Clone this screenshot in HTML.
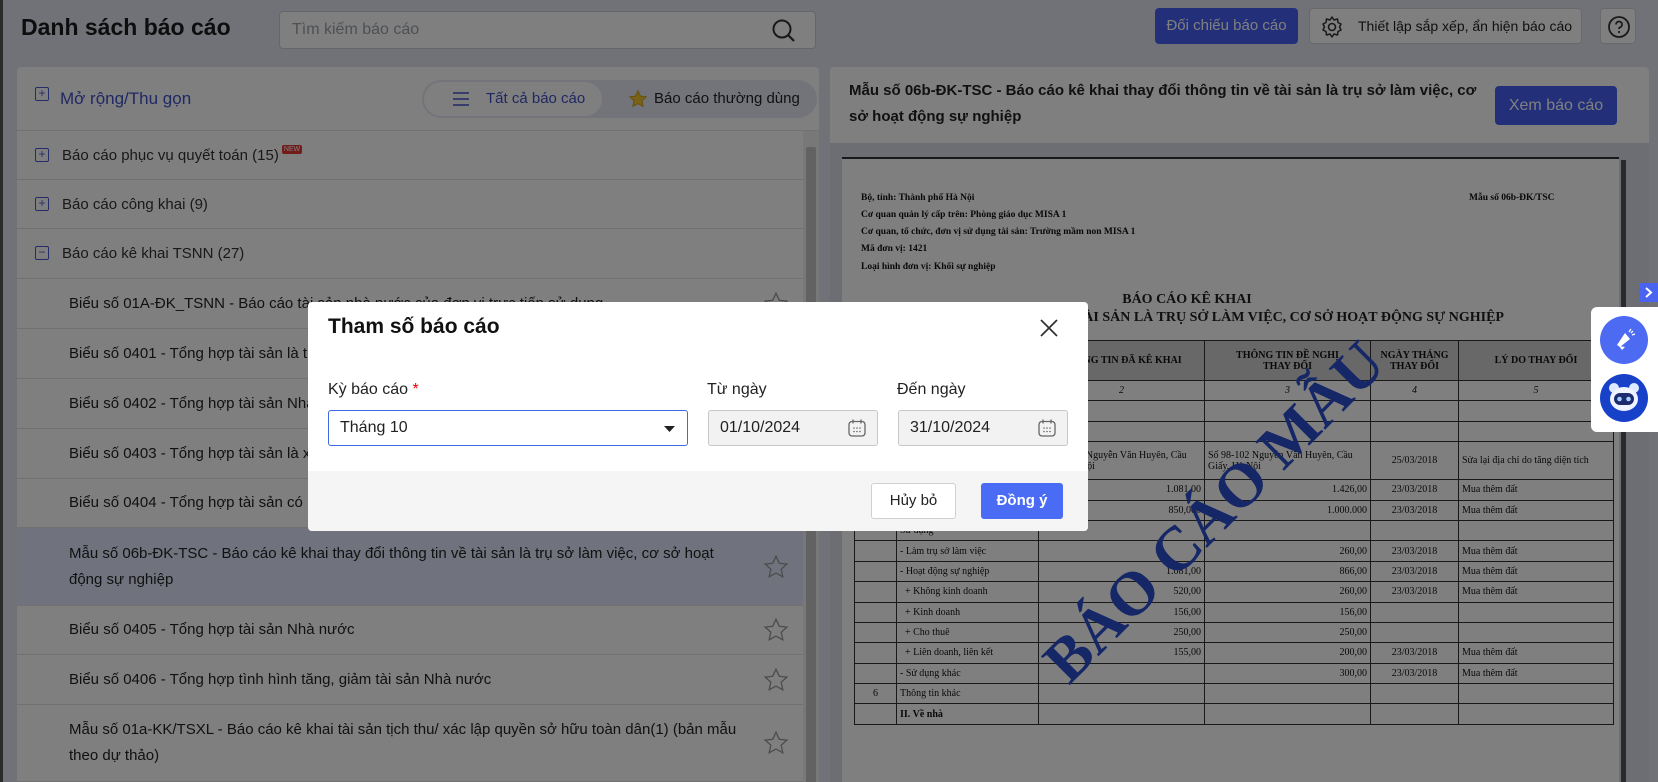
<!DOCTYPE html>
<html><head><meta charset="utf-8">
<style>
*{box-sizing:border-box;margin:0;padding:0}
html{overflow:hidden;width:1658px;height:782px}
body{width:1658px;height:782px;overflow:hidden;position:relative;background:#e0e5f0;font-family:"Liberation Sans",sans-serif;color:#212121}
.a{position:absolute}
.title{left:21px;top:14px;font-size:23px;font-weight:bold;color:#1a1a1a}
.search{left:279px;top:11px;width:537px;height:38px;background:#fff;border:1px solid #c8ccd4;border-radius:4px}
.search span{position:absolute;left:12px;top:9px;font-size:16px;color:#9aa0a8}
.btn1{left:1155px;top:8px;width:143px;height:36px;background:#4660f2;border-radius:4px;color:#fff;font-size:15px;text-align:center;line-height:36px}
.btn2{left:1309px;top:8px;width:273px;height:36px;background:#fff;border:1px solid #cfd3da;border-radius:4px;font-size:14px;line-height:34px;white-space:nowrap}
.btn3{left:1600px;top:8px;width:36px;height:36px;background:#fff;border:1px solid #cfd3da;border-radius:4px}
.lp{left:17px;top:67px;width:802px;height:715px;background:#fff;border-radius:4px 4px 0 0;overflow:hidden}
.row{position:absolute;left:0;width:786px;border-bottom:1px solid #e3e3e3;font-size:15px;display:flex;align-items:center}
.cat{padding-left:45px;color:#333;font-weight:500}
.item{padding-left:52px;padding-right:66px;color:#222;line-height:26px}
.pl{position:absolute;left:18px;width:14px;height:14px;border:1.5px solid #4a5bd0;border-radius:2px;color:#4a5bd0;font-size:12px;line-height:10px;text-align:center}
.star{position:absolute;right:14px;top:50%;margin-top:-13px}
.rp{left:830px;top:67px;width:819px;height:76px;background:#fff;border-radius:4px 4px 0 0}
.doc{left:830px;top:143px;width:819px;height:639px;background:#d8dde8}
.page{left:842px;top:157px;width:777px;height:625px;background:#fff;border-top:2px solid #333;font-family:"Liberation Serif",serif;font-weight:bold;overflow:hidden}
.dl{position:absolute;left:19px;font-size:9.5px;color:#111}
table{border-collapse:collapse;table-layout:fixed;position:absolute;left:12px;top:181px;width:760px;font-size:10px;font-weight:normal;color:#111}
td{border:1.5px solid #333;height:20.4px;padding:0 3px;white-space:nowrap;overflow:hidden}
th{border:1.5px solid #333;font-size:10px;background:#d0d0d0;height:40px;font-weight:bold}
.r{text-align:right}.c{text-align:center}
.ov{position:fixed;left:0;top:0;width:1658px;height:782px;background:rgba(0,0,0,0.5)}
.modal{left:308px;top:302px;width:780px;height:229px;background:#fff;border-radius:4px;overflow:hidden}
.lab{position:absolute;top:79px;font-size:16px;color:#222}
.inp{position:absolute;top:108px;height:36px;border:1px solid #c8c8c8;border-radius:3px;background:#f2f2f2;font-size:16px;line-height:34px;padding-left:11px}
.foot{position:absolute;left:0;top:169px;width:780px;height:60px;background:#f5f5f5}
</style></head><body>
<div class="a" style="left:0;top:0;width:3px;height:782px;background:#555"></div>
<div class="a title">Danh sách báo cáo</div>
<div class="a search"><span>Tìm kiếm báo cáo</span>
<svg class="a" style="left:491px;top:6px" width="26" height="26" viewBox="0 0 26 26"><circle cx="11" cy="11" r="8.5" fill="none" stroke="#333" stroke-width="2"/><line x1="17" y1="17" x2="23" y2="23" stroke="#333" stroke-width="2.2"/></svg></div>
<div class="a btn1">Đối chiếu báo cáo</div>
<div class="a btn2"><svg class="a" style="left:10px;top:6px" width="24" height="24" viewBox="0 0 24 24"><circle cx="12" cy="12" r="3.5" fill="none" stroke="#333" stroke-width="1.6"/><path d="M12 2l2 3 3.5-1 .5 3.5 3 1.5-1.5 3 1.5 3-3 1.5-.5 3.5-3.5-1-2 3-2-3-3.5 1-.5-3.5-3-1.5 1.5-3-1.5-3 3-1.5.5-3.5 3.5 1z" fill="none" stroke="#333" stroke-width="1.5" stroke-linejoin="round"/></svg><span style="position:absolute;left:48px">Thiết lập sắp xếp, ẩn hiện báo cáo</span></div>
<div class="a btn3"><svg class="a" style="left:6px;top:6px" width="24" height="24" viewBox="0 0 24 24"><circle cx="12" cy="12" r="10" fill="none" stroke="#333" stroke-width="1.8"/><path d="M9 9.5a3 3 0 1 1 4 2.8c-.8.3-1 .9-1 1.7" fill="none" stroke="#333" stroke-width="1.8"/><circle cx="12" cy="17" r="1.1" fill="#333"/></svg></div>

<div class="a lp">
 <div class="row" style="top:0;height:64px;width:802px"><div class="pl" style="top:20px">+</div><span style="position:absolute;left:43px;color:#3f51c7;font-size:17px;font-weight:500">Mở rộng/Thu gọn</span>
 <div style="position:absolute;left:405px;top:13px;width:395px;height:38px;background:#e5e9f5;border-radius:19px"><div style="position:absolute;left:2px;top:2px;width:178px;height:34px;background:#fff;border-radius:17px;color:#3f51c7;font-size:15px;line-height:34px;padding-left:62px">Tất cả báo cáo</div>
 <svg style="position:absolute;left:31px;top:12px" width="16" height="14"><path d="M0 1h16M0 7h16M0 13h16" stroke="#3f51c7" stroke-width="1.6"/></svg>
 <svg style="position:absolute;left:206px;top:9px" width="20" height="20" viewBox="0 0 24 24"><path d="M12 2l3 6.5 7 .8-5.2 4.8 1.5 7L12 17.6 5.7 21l1.5-7L2 9.3l7-.8z" fill="#f2c230" stroke="#c99a10"/></svg>
 <span style="position:absolute;left:232px;top:10px;font-size:15px;color:#222">Báo cáo thường dùng</span></div></div>
 <div class="row cat" style="top:64px;height:49px"><div class="pl" style="top:17px">+</div>Báo cáo phục vụ quyết toán (15)<span style="background:#e53935;color:#fff;font-size:7px;padding:1px 2px;border-radius:2px;margin-left:3px;margin-top:-12px">NEW</span></div>
 <div class="row cat" style="top:113px;height:49px"><div class="pl" style="top:17px">+</div>Báo cáo công khai (9)</div>
 <div class="row cat" style="top:162px;height:50px"><div class="pl" style="top:17px">−</div>Báo cáo kê khai TSNN (27)</div>
 <div class="row item" style="top:212px;height:50px">Biểu số 01A-ĐK_TSNN - Báo cáo tài sản nhà nước của đơn vị trực tiếp sử dụng<svg class="star" width="26" height="26" viewBox="0 0 24 24"><path d="M12 2l3 6.5 7 .8-5.2 4.8 1.5 7L12 17.6 5.7 21l1.5-7L2 9.3l7-.8z" fill="none" stroke="#999" stroke-width="1.2"/></svg></div>
 <div class="row item" style="top:262px;height:50px">Biểu số 0401 - Tổng hợp tài sản là trụ sở làm việc</div>
 <div class="row item" style="top:312px;height:50px">Biểu số 0402 - Tổng hợp tài sản Nhà nước</div>
 <div class="row item" style="top:362px;height:50px">Biểu số 0403 - Tổng hợp tài sản là xe ô tô</div>
 <div class="row item" style="top:412px;height:49px">Biểu số 0404 - Tổng hợp tài sản có nguyên giá</div>
 <div class="row item" style="top:461px;height:78px;background:#e0e5fb">Mẫu số 06b-ĐK-TSC - Báo cáo kê khai thay đổi thông tin về tài sản là trụ sở làm việc, cơ sở hoạt động sự nghiệp<svg class="star" width="26" height="26" viewBox="0 0 24 24"><path d="M12 2l3 6.5 7 .8-5.2 4.8 1.5 7L12 17.6 5.7 21l1.5-7L2 9.3l7-.8z" fill="none" stroke="#999" stroke-width="1.2"/></svg></div>
 <div class="row item" style="top:539px;height:49px">Biểu số 0405 - Tổng hợp tài sản Nhà nước<svg class="star" width="26" height="26" viewBox="0 0 24 24"><path d="M12 2l3 6.5 7 .8-5.2 4.8 1.5 7L12 17.6 5.7 21l1.5-7L2 9.3l7-.8z" fill="none" stroke="#999" stroke-width="1.2"/></svg></div>
 <div class="row item" style="top:588px;height:50px">Biểu số 0406 - Tổng hợp tình hình tăng, giảm tài sản Nhà nước<svg class="star" width="26" height="26" viewBox="0 0 24 24"><path d="M12 2l3 6.5 7 .8-5.2 4.8 1.5 7L12 17.6 5.7 21l1.5-7L2 9.3l7-.8z" fill="none" stroke="#999" stroke-width="1.2"/></svg></div>
 <div class="row item" style="top:638px;height:77px">Mẫu số 01a-KK/TSXL - Báo cáo kê khai tài sản tịch thu/ xác lập quyền sở hữu toàn dân(1) (bản mẫu theo dự thảo)<svg class="star" width="26" height="26" viewBox="0 0 24 24"><path d="M12 2l3 6.5 7 .8-5.2 4.8 1.5 7L12 17.6 5.7 21l1.5-7L2 9.3l7-.8z" fill="none" stroke="#999" stroke-width="1.2"/></svg></div>
 <div style="position:absolute;left:786px;top:64px;width:16px;height:660px;background:#f0f0f0"><div style="position:absolute;left:3px;top:16px;width:10px;height:640px;background:#c4c4c4;border-radius:2px"></div></div>
</div>

<div class="a rp"><div style="position:absolute;left:19px;top:11px;width:640px;font-size:15px;font-weight:bold;line-height:26px;color:#222">Mẫu số 06b-ĐK-TSC - Báo cáo kê khai thay đổi thông tin về tài sản là trụ sở làm việc, cơ sở hoạt động sự nghiệp</div>
<div style="position:absolute;left:665px;top:19px;width:122px;height:39px;background:#4660f2;border-radius:4px;color:#fff;font-size:16px;line-height:39px;text-align:center">Xem báo cáo</div></div>
<div class="a doc"></div>
<div class="a" style="left:1621px;top:160px;width:5px;height:622px;background:#555"></div>
<div class="a page">
 <div class="dl" style="top:34px">Bộ, tỉnh: Thành phố Hà Nội</div>
 <div class="dl" style="left:627px;top:34px">Mẫu số 06b-ĐK/TSC</div>
 <div class="dl" style="top:51px">Cơ quan quản lý cấp trên: Phòng giáo dục MISA 1</div>
 <div class="dl" style="top:68px">Cơ quan, tổ chức, đơn vị sử dụng tài sản: Trường mầm non MISA 1</div>
 <div class="dl" style="top:85px">Mã đơn vị: 1421</div>
 <div class="dl" style="top:103px">Loại hình đơn vị: Khối sự nghiệp</div>
 <div style="position:absolute;left:0;width:690px;text-align:center;top:133px;font-size:14px">BÁO CÁO KÊ KHAI</div>
 <div style="position:absolute;right:115px;top:151px;font-size:14px;white-space:nowrap">THAY ĐỔI THÔNG TIN VỀ TÀI SẢN LÀ TRỤ SỞ LÀM VIỆC, CƠ SỞ HOẠT ĐỘNG SỰ NGHIỆP</div>
 <table>
 <colgroup><col style="width:42px"><col style="width:142px"><col style="width:166px"><col style="width:166px"><col style="width:88px"><col></colgroup>
 <tr><th>STT</th><th>CHỈ TIÊU</th><th>THÔNG TIN ĐÃ KÊ KHAI</th><th>THÔNG TIN ĐỀ NGHỊ<br>THAY ĐỔI</th><th>NGÀY THÁNG<br>THAY ĐỔI</th><th>LÝ DO THAY ĐỔI</th></tr>
 <tr style="font-style:italic"><td class="c">A</td><td class="c">1</td><td class="c">2</td><td class="c">3</td><td class="c">4</td><td class="c">5</td></tr>
 <tr><td></td><td></td><td></td><td></td><td></td><td></td></tr>
 <tr><td></td><td>Địa chỉ nhà</td><td></td><td></td><td></td><td></td></tr>
 <tr><td style="height:38px"></td><td></td><td style="white-space:normal">Số 98-102 Nguyễn Văn Huyên, Cầu Giấy, Hà Nội</td><td style="white-space:normal">Số 98-102 Nguyễn Văn Huyên, Cầu Giấy, Hà Nội</td><td class="c">25/03/2018</td><td>Sửa lại địa chỉ do tăng diện tích</td></tr>
 <tr><td></td><td>Diện tích đất</td><td class="r">1.081,00</td><td class="r">1.426,00</td><td class="c">23/03/2018</td><td>Mua thêm đất</td></tr>
 <tr><td></td><td>Diện tích sàn</td><td class="r">850,000</td><td class="r">1.000.000</td><td class="c">23/03/2018</td><td>Mua thêm đất</td></tr>
 <tr><td></td><td>Sử dụng</td><td></td><td></td><td></td><td></td></tr>
 <tr><td></td><td>- Làm trụ sở làm việc</td><td></td><td class="r">260,00</td><td class="c">23/03/2018</td><td>Mua thêm đất</td></tr>
 <tr><td></td><td>- Hoạt động sự nghiệp</td><td class="r">1.081,00</td><td class="r">866,00</td><td class="c">23/03/2018</td><td>Mua thêm đất</td></tr>
 <tr><td></td><td>&nbsp;&nbsp;+ Không kinh doanh</td><td class="r">520,00</td><td class="r">260,00</td><td class="c">23/03/2018</td><td>Mua thêm đất</td></tr>
 <tr><td></td><td>&nbsp;&nbsp;+ Kinh doanh</td><td class="r">156,00</td><td class="r">156,00</td><td></td><td></td></tr>
 <tr><td></td><td>&nbsp;&nbsp;+ Cho thuê</td><td class="r">250,00</td><td class="r">250,00</td><td></td><td></td></tr>
 <tr><td></td><td>&nbsp;&nbsp;+ Liên doanh, liên kết</td><td class="r">155,00</td><td class="r">200,00</td><td class="c">23/03/2018</td><td>Mua thêm đất</td></tr>
 <tr><td></td><td>- Sử dụng khác</td><td></td><td class="r">300,00</td><td class="c">23/03/2018</td><td>Mua thêm đất</td></tr>
 <tr><td class="c">6</td><td>Thông tin khác</td><td></td><td></td><td></td><td></td></tr>
 <tr><td></td><td style="font-weight:bold">II. Về nhà</td><td></td><td></td><td></td><td></td></tr>
 </table>
 <div style="position:absolute;left:188px;top:488px;transform:rotate(-45deg);transform-origin:0 0;font-size:62px;color:#2d4fd0;white-space:nowrap">BÁO CÁO MẪU</div>
</div>

<div class="ov"></div>

<div class="a" style="left:1639px;top:283px;width:19px;height:19px;background:#4a63f0;border-radius:2px 0 0 2px"><svg width="19" height="19"><path d="M7 5l5 4.5L7 14" fill="none" stroke="#fff" stroke-width="2"/></svg></div>
<div class="a" style="left:1591px;top:307px;width:67px;height:125px;background:#fff;border-radius:6px 0 0 6px">
 <div style="position:absolute;left:9px;top:9px;width:48px;height:48px;border-radius:50%;background:#4d6af3"><svg width="48" height="48" viewBox="0 0 48 48"><path d="M17 29l8-12 5 6-10 8z" fill="#fff"/><path d="M19 30l3 4 3-3" fill="#fff"/><path d="M29 16l2-3M32 19l3-1M31 17l2-2" stroke="#fff" stroke-width="1.3"/></svg></div>
 <div style="position:absolute;left:9px;top:67px;width:48px;height:48px;border-radius:50%;background:#1641c8"><svg width="48" height="48" viewBox="0 0 48 48"><circle cx="14" cy="14" r="5" fill="#dde8ff"/><circle cx="34" cy="14" r="5" fill="#dde8ff"/><ellipse cx="24" cy="25" rx="14" ry="12" fill="#eef3ff"/><rect x="14" y="19" width="20" height="12" rx="6" fill="#1d2a6e"/><circle cx="19.5" cy="25" r="2.3" fill="#9fd0ff"/><circle cx="28.5" cy="25" r="2.3" fill="#9fd0ff"/></svg></div>
</div>

<div class="a modal">
 <div style="position:absolute;left:20px;top:13px;font-size:21px;font-weight:bold;color:#111">Tham số báo cáo</div>
 <svg style="position:absolute;left:731px;top:16px" width="20" height="20"><path d="M2 2l16 16M18 2L2 18" stroke="#333" stroke-width="1.8"/></svg>
 <div class="lab" style="left:20px">Kỳ báo cáo <span style="color:#e00">*</span></div>
 <div class="lab" style="left:399px">Từ ngày</div>
 <div class="lab" style="left:589px">Đến ngày</div>
 <div class="inp" style="left:20px;width:360px;background:#fff;border-color:#3d6ae8">Tháng 10<svg style="position:absolute;right:12px;top:15px" width="11" height="6"><path d="M0 0h11L5.5 6z" fill="#222"/></svg></div>
 <div class="inp" style="left:400px;width:170px">01/10/2024<svg style="position:absolute;right:10px;top:7px" width="20" height="20" viewBox="0 0 20 20"><rect x="2" y="3.5" width="16" height="14.5" rx="3" fill="none" stroke="#666" stroke-width="1.3"/><path d="M6 1.5v4M14 1.5v4" stroke="#666" stroke-width="1.3"/><g fill="#666"><circle cx="7" cy="10" r=".8"/><circle cx="10" cy="10" r=".8"/><circle cx="13" cy="10" r=".8"/><circle cx="7" cy="13.5" r=".8"/><circle cx="10" cy="13.5" r=".8"/><circle cx="13" cy="13.5" r=".8"/></g></svg></div>
 <div class="inp" style="left:590px;width:170px">31/10/2024<svg style="position:absolute;right:10px;top:7px" width="20" height="20" viewBox="0 0 20 20"><rect x="2" y="3.5" width="16" height="14.5" rx="3" fill="none" stroke="#666" stroke-width="1.3"/><path d="M6 1.5v4M14 1.5v4" stroke="#666" stroke-width="1.3"/><g fill="#666"><circle cx="7" cy="10" r=".8"/><circle cx="10" cy="10" r=".8"/><circle cx="13" cy="10" r=".8"/><circle cx="7" cy="13.5" r=".8"/><circle cx="10" cy="13.5" r=".8"/><circle cx="13" cy="13.5" r=".8"/></g></svg></div>
 <div class="foot">
  <div style="position:absolute;left:563px;top:12px;width:85px;height:36px;background:#fff;border:1px solid #d0d0d0;border-radius:3px;font-size:15px;line-height:34px;text-align:center;color:#222">Hủy bỏ</div>
  <div style="position:absolute;left:673px;top:12px;width:82px;height:36px;background:#4a6cf5;border-radius:3px;font-size:15px;line-height:36px;text-align:center;color:#fff;font-weight:bold">Đồng ý</div>
 </div>
</div>
</body></html>
